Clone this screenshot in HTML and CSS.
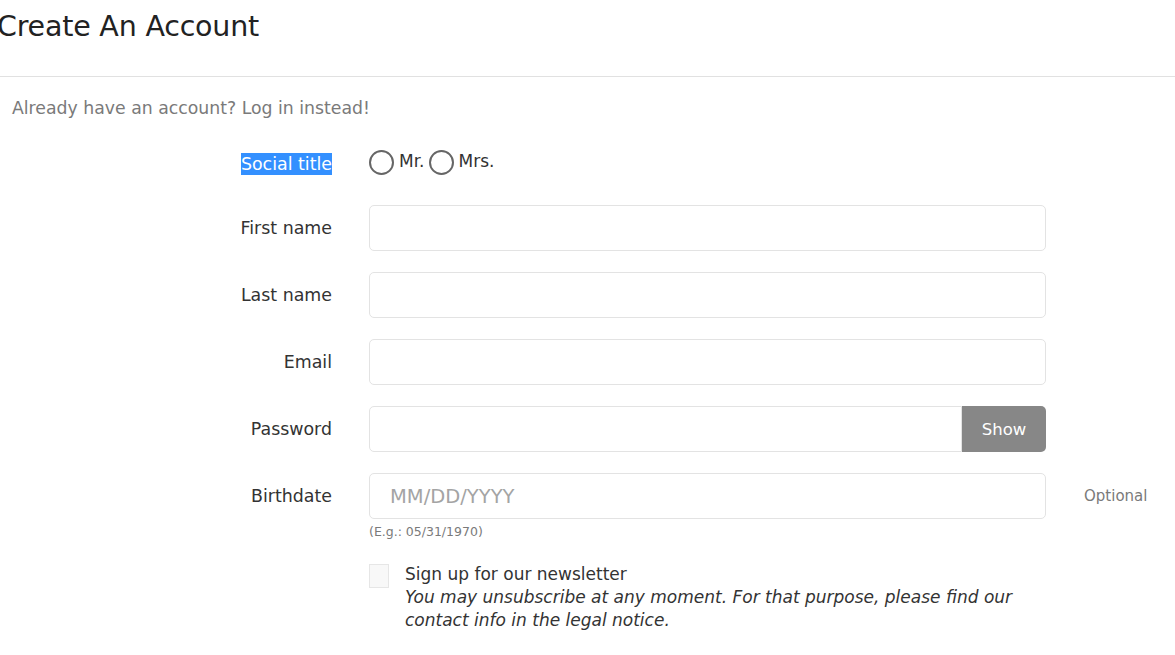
FILE: index.html
```html
<!DOCTYPE html>
<html lang="en">
<head>
    <meta charset="UTF-8">
    <meta name="viewport" content="width=device-width, initial-scale=1.0">
    <title>Create An Account</title>
    <link rel="stylesheet" href="styles.css">
</head>
<body>
    <header class="page-header">
        <h1>Create An Account</h1>
    </header>

    <section class="register">
        <p class="login-hint">Already have an account? <a href="#">Log in instead!</a></p>

        <form class="register-form">
            <!-- social title -->
            <div class="form-row radio-row">
                <label class="form-label"><span class="selected">Social title</span></label>
                <div class="form-field radios">
                    <label class="radio"><span class="radio-circle"></span>Mr.</label>
                    <label class="radio"><span class="radio-circle"></span>Mrs.</label>
                </div>
            </div>

            <div class="form-row">
                <label class="form-label">First name</label>
                <div class="form-field"><input type="text"></div>
            </div>

            <div class="form-row">
                <label class="form-label">Last name</label>
                <div class="form-field"><input type="text"></div>
            </div>

            <div class="form-row">
                <label class="form-label">Email</label>
                <div class="form-field"><input type="email"></div>
            </div>

            <div class="form-row">
                <label class="form-label">Password</label>
                <div class="form-field input-group">
                    <input type="password">
                    <button type="button" class="show-btn">Show</button>
                </div>
            </div>

            <div class="form-row">
                <label class="form-label">Birthdate</label>
                <div class="form-field">
                    <input type="text" placeholder="MM/DD/YYYY">
                    <span class="help">(E.g.: 05/31/1970)</span>
                </div>
                <span class="comment">Optional</span>
            </div>

            <div class="form-row">
                <span class="form-label"></span>
                <div class="form-field newsletter">
                    <span class="checkbox"></span>
                    <div class="newsletter-text">
                        Sign up for our newsletter<br>
                        <em>You may unsubscribe at any moment. For that purpose, please find our contact info in the legal notice.</em>
                    </div>
                </div>
            </div>
        </form>
    </section>
</body>
</html>
```

FILE: styles.css
```css
body {
    margin: 0;
    font-family: "DejaVu Sans", "Open Sans", Arial, sans-serif;
    color: #333;
    background: #fff;
    overflow: hidden;
}

.page-header {
    height: 76px;
    border-bottom: 1px solid #e1e1e1;
}

.page-header h1 {
    margin: 0 0 0 -3px;
    padding-top: 10px;
    font-size: 28.5px;
    font-weight: 400;
    line-height: 34px;
    color: #222;
    letter-spacing: -0.2px;
}

.login-hint {
    margin: 0;
    padding: 21px 0 0 12px;
    font-size: 17.3px;
    color: #7a7a7a;
}

.login-hint a {
    color: #7a7a7a;
    text-decoration: none;
}

.register-form {
    margin-top: 33px;
}

.form-row {
    display: flex;
    align-items: flex-start;
    margin-bottom: 21px;
}

.form-label {
    width: 332px;
    flex: none;
    text-align: right;
    font-size: 17.4px;
    line-height: 46px;
    color: #333;
}

.radio-row {
    margin-bottom: 28px;
}

.radio-row .form-label {
    line-height: 26px;
}

.selected {
    background: #3390ff;
    color: #fff;
    padding: 1px 0;
}

.form-field {
    width: 677px;
    margin-left: 37px;
    flex: none;
}

.radios {
    display: flex;
    gap: 4px;
    font-size: 17px;
    line-height: 20px;
}

.radio {
    display: flex;
    align-items: flex-start;
    gap: 5px;
}

.radio-circle {
    width: 21px;
    height: 21px;
    border: 2px solid #666;
    border-radius: 50%;
    margin-top: -1px;
}

input {
    box-sizing: border-box;
    width: 100%;
    height: 46px;
    border: 1px solid #e3e3e3;
    border-radius: 5px;
    padding: 0 20px;
    font-family: inherit;
    font-size: 19.5px;
    color: #333;
    outline: none;
}

input::placeholder {
    color: #a4a4a4;
}

.input-group {
    display: flex;
}

.input-group input {
    border-radius: 5px 0 0 5px;
}

.show-btn {
    flex: none;
    width: 84px;
    height: 46px;
    border: none;
    border-radius: 0 5px 5px 0;
    background: #878787;
    color: #fff;
    font-family: inherit;
    font-size: 16.5px;
}

.help {
    display: block;
    margin-top: 3px;
    font-size: 12.5px;
    color: #7a7a7a;
    line-height: 20px;
}

.comment {
    margin-left: 38px;
    font-size: 15px;
    color: #7a7a7a;
    line-height: 46px;
}

.newsletter {
    display: flex;
    gap: 16px;
}

.checkbox {
    flex: none;
    width: 18px;
    height: 22px;
    border: 1px solid #e6e6e6;
    background: #f8f8f8;
    margin-top: 1px;
}

.newsletter-text {
    font-size: 17px;
    line-height: 23px;
    color: #333;
    padding-right: 18px;
}
```
